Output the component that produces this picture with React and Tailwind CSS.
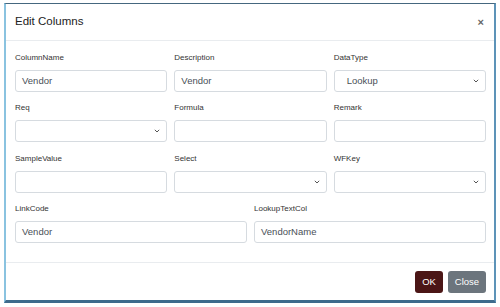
import React from 'react';

const font = { fontFamily: '"Liberation Sans", Arial, sans-serif' };

function Chevron() {
  return (
    <svg width="6" height="4" viewBox="0 0 6 4" className="absolute right-[6px] top-1/2 -translate-y-1/2">
      <path d="M0.8 0.8 L3 3 L5.2 0.8" fill="none" stroke="#555" strokeWidth="1" />
    </svg>
  );
}

function Field({ label, value, select }) {
  return (
    <div className="flex flex-col">
      <div className="h-[10px] text-[8px] leading-[10px] text-[#333] mb-[7px]">{label}</div>
      <div className="relative h-[22px] rounded-[3px] border border-[#d6dbe0] bg-white pl-[6px] flex items-center text-[9.5px] text-[#495057]">
        {value}
        {select && <Chevron />}
      </div>
    </div>
  );
}

export default function App() {
  return (
    <div className="w-[500px] h-[307px] bg-white pt-[3px] pl-[4px]" style={font}>
      <div className="w-[492px] h-[300px] flex flex-col bg-white border-t border-t-[#45677f] border-l-[2px] border-l-[#8ac3e0] border-r-[2px] border-r-[#5d93b8] border-b-[3px] border-b-[#3e6b8c]">
        {/* header */}
        <div className="h-[37px] shrink-0 flex items-center justify-between pl-[9px] pr-[10px] border-b border-[#e9ecef]">
          <span className="text-[11.5px] text-[#222]">Edit Columns</span>
          <span className="text-[11px] font-bold text-[#666] leading-none">×</span>
        </div>

        {/* body */}
        <div className="flex-1 pt-[12px] pl-[9px] pr-[8px] flex flex-col">
          <div className="grid grid-cols-3 gap-x-[7px]">
            <Field label="ColumnName" value="Vendor" />
            <Field label="Description" value="Vendor" />
            <Field label="DataType" value={<span className="pl-[6px]">Lookup</span>} select />
          </div>
          <div className="grid grid-cols-3 gap-x-[7px] mt-[11px]">
            <Field label="Req" value="" select />
            <Field label="Formula" value="" />
            <Field label="Remark" value="" />
          </div>
          <div className="grid grid-cols-3 gap-x-[7px] mt-[12px]">
            <Field label="SampleValue" value="" />
            <Field label="Select" value="" select />
            <Field label="WFKey" value="" select />
          </div>
          <div className="grid grid-cols-2 gap-x-[7px] mt-[11px]">
            <Field label="LinkCode" value="Vendor" />
            <Field label="LookupTextCol" value="VendorName" />
          </div>
        </div>

        {/* footer */}
        <div className="h-[38px] shrink-0 border-t border-[#e9ecef] flex items-start justify-end gap-[5px] pt-[8px] pr-[8px]">
          <button className="h-[22px] w-[28px] rounded-[3px] bg-[#4b1616] text-white text-[9.5px]">OK</button>
          <button className="h-[22px] w-[38px] rounded-[3px] bg-[#6c757d] text-white text-[9.5px]">Close</button>
        </div>
      </div>
    </div>
  );
}
